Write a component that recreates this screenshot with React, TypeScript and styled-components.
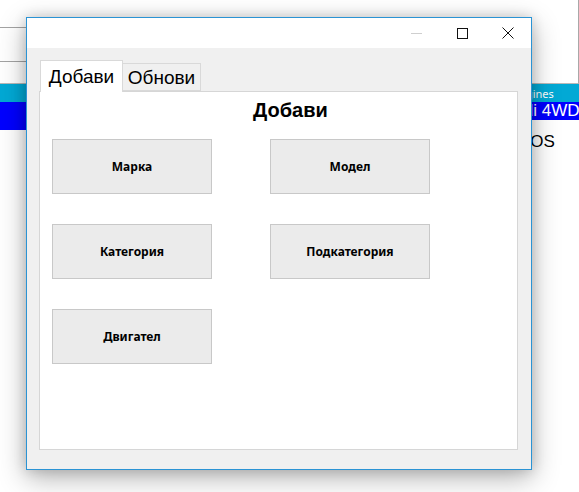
import React from "react";
import styled, { createGlobalStyle } from "styled-components";

const GlobalStyle = createGlobalStyle`
  html, body { margin: 0; padding: 0; background: #ffffff; }
  body { width: 579px; height: 492px; overflow: hidden; font-family: "Noto Sans", sans-serif; }
  * { box-sizing: border-box; }
`;

const Desktop = styled.div`
  position: relative;
  width: 579px;
  height: 492px;
  overflow: hidden;
  background: #ffffff;
`;

/* ---------- background application ---------- */
const BackApp = styled.div`
  display: flex;
  flex-direction: column;
  width: 579px;
`;

const TopPanel = styled.div`
  height: 84px;
  display: flex;
  border-bottom: 1px solid #b9b9b9;
  border-right: 1px solid #a8a8a8;
`;

const FieldColumn = styled.div`
  display: flex;
  flex-direction: column;
  width: 300px;
`;

const Field = styled.div<{ $h: number }>`
  height: ${(p) => p.$h}px;
  border-bottom: 1px solid #a3a3a3;
`;

const GridRow = styled.div<{ $bg: string; $h: number; $color: string; $size: number; $top?: boolean }>`
  display: grid;
  grid-template-columns: 500px 1fr;
  grid-template-rows: ${(p) => p.$h}px;
  height: ${(p) => p.$h}px;
  background: ${(p) => p.$bg};
  color: ${(p) => p.$color};
  font-family: "Liberation Sans", Arial, sans-serif;
  font-size: ${(p) => p.$size}px;
  align-items: center;
  white-space: nowrap;
  position: relative;
  z-index: ${(p) => (p.$top ? 2 : 1)};
`;

const GridCell = styled.div<{ $pad: number }>`
  padding-left: ${(p) => p.$pad}px;
  overflow: hidden;
`;

const SelectedListCell = styled(GridCell)`
  align-self: start;
  height: 28px;
  line-height: 18px;
  background: #0000ff;
`;

const HeaderCell = styled(GridCell)`
  font-family: "Noto Sans", sans-serif;
`;

/* ---------- dialog window ---------- */
const Window = styled.section`
  position: absolute;
  z-index: 5;
  left: 26px;
  top: 17px;
  width: 506px;
  height: 453px;
  border: 1px solid #2a93d4;
  background: #f0f0f0;
  box-shadow: 0 8px 26px rgba(0, 0, 0, 0.3), 0 0 12px rgba(0, 0, 0, 0.16);
  display: flex;
  flex-direction: column;
`;

const TitleBar = styled.header`
  height: 30px;
  background: #ffffff;
  display: flex;
  justify-content: flex-end;
`;

const CaptionButton = styled.div`
  width: 46px;
  height: 30px;
  display: flex;
  align-items: center;
  justify-content: center;
`;

const MinGlyph = styled.span`
  width: 11px;
  height: 1px;
  background: #cfcfcf;
`;

const MaxGlyph = styled.span`
  width: 11px;
  height: 11px;
  border: 1px solid #111;
`;

const Client = styled.div`
  flex: 1;
  display: flex;
  flex-direction: column;
  padding: 12px 13px 19px 12px;
`;

const TabStrip = styled.div`
  display: flex;
  align-items: flex-end;
  height: 31px;
  padding-left: 1px;
`;

const Tab = styled.div<{ $active?: boolean; $w: number }>`
  position: relative;
  z-index: ${(p) => (p.$active ? 1 : 0)};
  width: ${(p) => p.$w}px;
  height: ${(p) => (p.$active ? 32 : 28)}px;
  margin-bottom: ${(p) => (p.$active ? -1 : 0)}px;
  background: ${(p) => (p.$active ? "#ffffff" : "#f0f0f0")};
  border: 1px solid #d9d9d9;
  border-bottom: ${(p) => (p.$active ? "none" : "1px solid #d9d9d9")};
  border-left: ${(p) => (p.$active ? "1px solid #d9d9d9" : "none")};
  font-family: "Liberation Sans", Arial, sans-serif;
  font-size: 19px;
  color: #000;
  display: flex;
  align-items: center;
  justify-content: center;
  padding-top: ${(p) => (p.$active ? 1 : 2)}px;
`;

const Page = styled.div`
  flex: 1;
  background: #ffffff;
  border: 1px solid #d6d6d6;
  display: flex;
  flex-direction: column;
`;

const Heading = styled.h1`
  margin: 6px 0 0 213px;
  font-family: "Liberation Sans", Arial, sans-serif;
  font-weight: bold;
  font-size: 20px;
  line-height: 24px;
  color: #000;
`;

const ButtonGrid = styled.div`
  margin: 17px 0 0 12px;
  display: grid;
  grid-template-columns: 160px 160px;
  grid-auto-rows: 55px;
  column-gap: 58px;
  row-gap: 30px;
`;

const ActionButton = styled.button`
  background: #ebebeb;
  border: 1px solid #c8c8c8;
  border-radius: 0;
  font-family: "Noto Sans", sans-serif;
  font-weight: bold;
  font-size: 12px;
  color: #000;
  padding: 0;
  padding-bottom: 1px;
`;

export default function App() {
  return (
    <>
      <GlobalStyle />
      <Desktop>
        <BackApp>
          <TopPanel>
            <FieldColumn>
              <Field $h={28} />
              <Field $h={34} />
            </FieldColumn>
          </TopPanel>
          <GridRow $bg="#02a9d5" $h={18} $color="#ffffff" $size={11}>
            <HeaderCell $pad={60}>Марка</HeaderCell>
            <HeaderCell $pad={13}>Engines</HeaderCell>
          </GridRow>
          <GridRow $bg="#0000ff" $h={18} $color="#ffffff" $size={17} $top>
            <SelectedListCell $pad={60}>Audi</SelectedListCell>
            <GridCell $pad={3}>Audi 4WD</GridCell>
          </GridRow>
          <GridRow $bg="#ffffff" $h={44} $color="#000000" $size={17}>
            <GridCell $pad={60}>BMW</GridCell>
            <GridCell $pad={18}>DOS</GridCell>
          </GridRow>
        </BackApp>

        <Window>
          <TitleBar>
            <CaptionButton>
              <MinGlyph />
            </CaptionButton>
            <CaptionButton>
              <MaxGlyph />
            </CaptionButton>
            <CaptionButton>
              <svg width="12" height="12" viewBox="0 0 12 12">
                <path d="M0.5 0.5 L11.5 11.5 M11.5 0.5 L0.5 11.5" stroke="#111" strokeWidth="1" fill="none" />
              </svg>
            </CaptionButton>
          </TitleBar>
          <Client>
            <TabStrip>
              <Tab $active $w={83}>Добави</Tab>
              <Tab $w={78}>Обнови</Tab>
            </TabStrip>
            <Page>
              <Heading>Добави</Heading>
              <ButtonGrid>
                <ActionButton>Марка</ActionButton>
                <ActionButton>Модел</ActionButton>
                <ActionButton>Категория</ActionButton>
                <ActionButton>Подкатегория</ActionButton>
                <ActionButton>Двигател</ActionButton>
              </ButtonGrid>
            </Page>
          </Client>
        </Window>
      </Desktop>
    </>
  );
}
